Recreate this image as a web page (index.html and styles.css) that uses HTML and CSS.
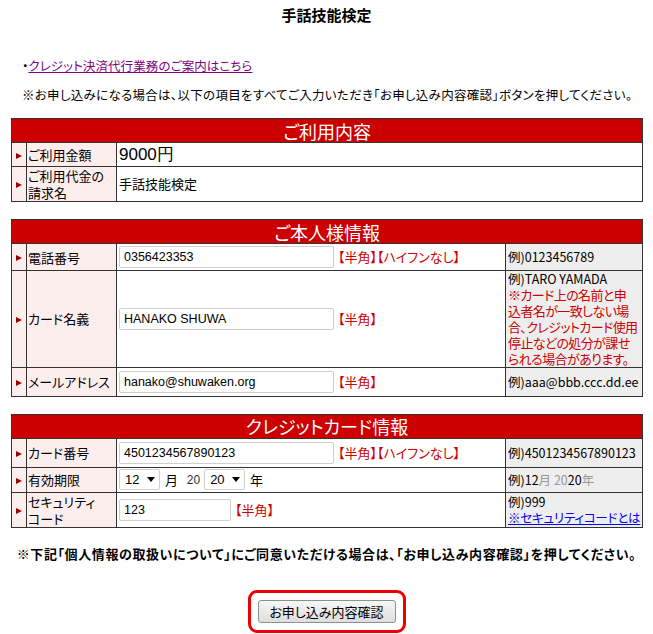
FILE: index.html
```html
<!DOCTYPE html>
<html lang="ja">
<head>
    <meta charset="UTF-8">
    <title>手話技能検定</title>
    <link rel="stylesheet" href="styles.css">
</head>
<body>

    <h1 class="title">手話技能検定</h1>

    <div class="intro">
        <p class="link-line">・<a href="#">クレジット決済代行業務のご案内はこちら</a></p>
        <p class="notice">※お申し込みになる場合は、以下の項目をすべてご入力いただき「お申し込み内容確認」ボタンを押してください。</p>
    </div>

    <!-- ご利用内容 -->
    <table class="form-table">
        <colgroup>
            <col class="c-mark"><col class="c-label"><col class="c-value"><col class="c-example">
        </colgroup>
        <tr><th colspan="4" class="section">ご利用内容</th></tr>
        <tr class="h24">
            <td class="mark"><span class="arrow"></span></td>
            <td class="label">ご利用金額</td>
            <td colspan="2" class="price">9000円</td>
        </tr>
        <tr class="h35">
            <td class="mark"><span class="arrow"></span></td>
            <td class="label">ご利用代金の<br>請求名</td>
            <td colspan="2">手話技能検定</td>
        </tr>
    </table>

    <!-- ご本人様情報 -->
    <table class="form-table">
        <colgroup>
            <col class="c-mark"><col class="c-label"><col class="c-value"><col class="c-example">
        </colgroup>
        <tr><th colspan="4" class="section">ご本人様情報</th></tr>
        <tr class="h27">
            <td class="mark"><span class="arrow"></span></td>
            <td class="label">電話番号</td>
            <td><input type="text" class="field" value="0356423353"><span class="hint">【半角】【ハイフンなし】</span></td>
            <td class="example">例)0123456789</td>
        </tr>
        <tr class="h95">
            <td class="mark"><span class="arrow"></span></td>
            <td class="label">カード名義</td>
            <td><input type="text" class="field" value="HANAKO SHUWA"><span class="hint">【半角】</span></td>
            <td class="example">例)TARO YAMADA<br><span class="warn">※カード上の名前と申<br>込者名が一致しない場<br>合、クレジットカード使用<br>停止などの処分が課せ<br>られる場合があります。</span></td>
        </tr>
        <tr class="h29">
            <td class="mark"><span class="arrow"></span></td>
            <td class="label">メールアドレス</td>
            <td><input type="text" class="field" value="hanako@shuwaken.org"><span class="hint">【半角】</span></td>
            <td class="example">例)aaa@bbb.ccc.dd.ee</td>
        </tr>
    </table>

    <!-- クレジットカード情報 -->
    <table class="form-table">
        <colgroup>
            <col class="c-mark"><col class="c-label"><col class="c-value"><col class="c-example">
        </colgroup>
        <tr><th colspan="4" class="section">クレジットカード情報</th></tr>
        <tr class="h29">
            <td class="mark"><span class="arrow"></span></td>
            <td class="label">カード番号</td>
            <td><input type="text" class="field" value="4501234567890123"><span class="hint">【半角】【ハイフンなし】</span></td>
            <td class="example">例)4501234567890123</td>
        </tr>
        <tr class="h25">
            <td class="mark"><span class="arrow"></span></td>
            <td class="label">有効期限</td>
            <td class="expiry">
                <span class="select">12<span class="caret"></span></span>
                <span class="unit">月</span>
                <span class="unit num">20</span>
                <span class="select">20<span class="caret"></span></span>
                <span class="unit">年</span>
            </td>
            <td class="example">例)12<span class="dim">月 20</span>20<span class="dim">年</span></td>
        </tr>
        <tr class="h35">
            <td class="mark"><span class="arrow"></span></td>
            <td class="label">セキュリティ<br>コード</td>
            <td><input type="text" class="field short" value="123"><span class="hint">【半角】</span></td>
            <td class="example">例)999<br><a href="#" class="help">※セキュリティコードとは</a></td>
        </tr>
    </table>

    <p class="agree">※下記「個人情報の取扱いについて」にご同意いただける場合は、「お申し込み内容確認」を押してください。</p>

    <div class="actions">
        <div class="highlight-box">
            <button type="button" class="confirm">お申し込み内容確認</button>
        </div>
    </div>

</body>
</html>
```

FILE: styles.css
```css
body {
    margin: 0;
    padding: 0 11px;
    font-family: "Noto Sans CJK JP", sans-serif;
    font-feature-settings: "palt";
    font-size: 13px;
    color: #000;
    background: #fff;
}

.title {
    margin: 0;
    padding-top: 4px;
    height: 22px;
    font-size: 15px;
    font-weight: bold;
    text-align: center;
    line-height: 22px;
}

.intro {
    padding: 31px 0 0 11px;
    height: 92px;
    box-sizing: border-box;
}

.intro p {
    margin: 0;
    line-height: 18px;
    white-space: nowrap;
}

.link-line {
    font-size: 12.5px;
    letter-spacing: 0.1px;
}

.link-line a {
    color: #800080;
}

.notice {
    margin-top: 11px !important;
    font-size: 12.5px;
    letter-spacing: 0.3px;
}

.form-table {
    width: 631px;
    border-collapse: collapse;
    table-layout: fixed;
    margin-bottom: 17px;
}

.form-table td,
.form-table th {
    border: 1px solid #333;
    padding: 0 2px;
    vertical-align: middle;
    line-height: 16px;
}

.c-mark { width: 15px; }
.c-label { width: 90px; }
.c-value { width: 389px; }
.c-example { width: 137px; }

.section {
    background: #cc0000;
    color: #fff;
    font-size: 18px;
    font-weight: normal;
    height: 23px;
    line-height: 23px;
    padding: 0;
}

.h24 { height: 24px; }
.h25 { height: 25px; }
.h27 { height: 27px; }
.h29 { height: 29px; }
.h35 { height: 35px; }
.h95 { height: 95px; }

.mark,
.label {
    background: #fdeeee;
}

.mark {
    text-align: center;
    padding: 0;
}

.arrow {
    display: inline-block;
    width: 0;
    height: 0;
    border-top: 3px solid transparent;
    border-bottom: 3px solid transparent;
    border-left: 6px solid #990000;
    vertical-align: middle;
}

.form-table .label {
    padding-left: 1px;
    white-space: nowrap;
    line-height: 17px;
}

.price {
    font-family: "Liberation Sans", sans-serif;
    font-size: 17px;
}

.price,
.form-table td:nth-child(3) {
    padding-left: 2px;
}

.field {
    width: 215px;
    height: 22px;
    box-sizing: border-box;
    border: 1px solid #cfcfcf;
    border-radius: 2px;
    padding: 0 4px;
    font-family: "Liberation Sans", sans-serif;
    font-size: 12.5px;
    color: #000;
    vertical-align: middle;
}

.field.short {
    width: 112px;
}

.hint {
    color: #cc0000;
    margin-left: 4px;
    vertical-align: middle;
}

.form-table .example {
    background: #eeeeee;
    font-size: 12.5px;
    padding: 0 1px 0 2px;
    line-height: 15.5px;
    white-space: nowrap;
}

.warn {
    color: #cc0000;
    font-size: 13px;
    line-height: 16px;
    letter-spacing: -0.6px;
}

.dim {
    color: #999;
}

.help {
    color: #0000ee;
    font-size: 12.5px;
    letter-spacing: -0.2px;
}

.expiry {
    white-space: nowrap;
}

.select {
    display: inline-flex;
    align-items: center;
    justify-content: space-between;
    width: 41px;
    height: 21px;
    box-sizing: border-box;
    border: 1px solid #cfcfcf;
    border-radius: 2px;
    padding: 0 4px 0 5px;
    font-family: "Liberation Sans", sans-serif;
    font-size: 13px;
    vertical-align: middle;
    background: #fff;
}

.caret {
    width: 0;
    height: 0;
    border-left: 4px solid transparent;
    border-right: 4px solid transparent;
    border-top: 5px solid #000;
}

.unit {
    margin: 0 2px;
    vertical-align: middle;
}

.unit.num {
    font-family: "Liberation Sans", sans-serif;
    font-size: 12px;
    color: #333;
    margin: 0 1px 0 4px;
}

.agree {
    margin: 13px 0 0;
    text-align: center;
    font-weight: bold;
    font-size: 13px;
    letter-spacing: 0.6px;
    line-height: 18px;
    white-space: nowrap;
}

.actions {
    display: flex;
    justify-content: center;
    padding-top: 27px;
}

.highlight-box {
    border: 3px solid #ee0000;
    border-radius: 9px;
    padding: 7px 7px;
}

.confirm {
    height: 23px;
    width: 138px;
    border: 1px solid #8f8f8f;
    border-radius: 3px;
    background: linear-gradient(#f6f6f6, #dedede);
    font-family: "Noto Sans CJK JP", sans-serif;
    font-feature-settings: "palt";
    font-size: 13px;
    color: #000;
    padding: 0;
}
```
